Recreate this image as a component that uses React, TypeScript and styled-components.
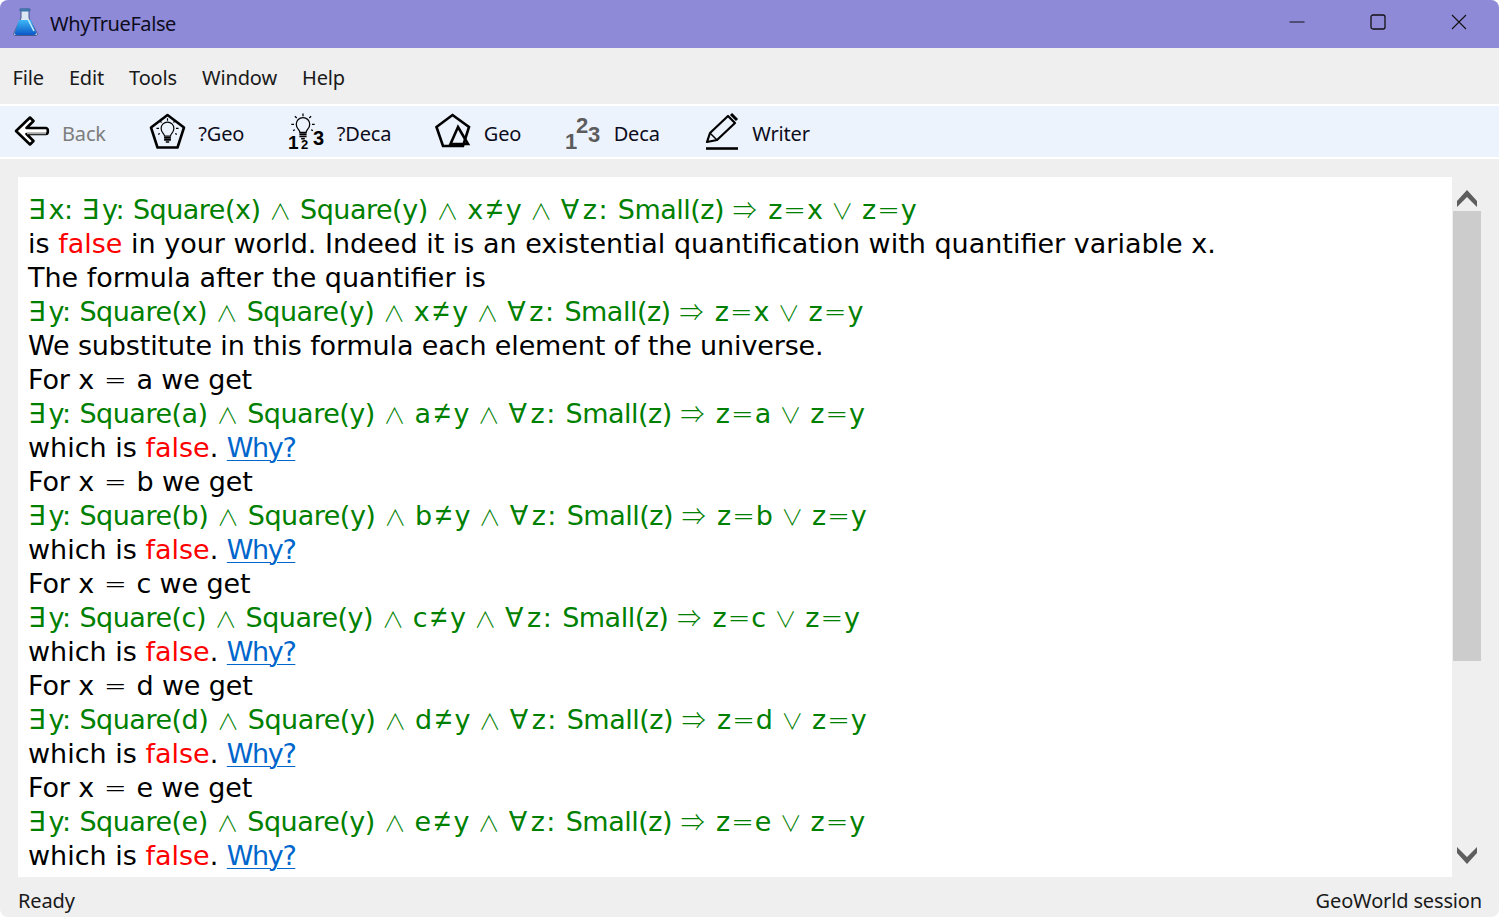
import styled, { createGlobalStyle } from "styled-components";
import { Fragment } from "react";

const GlobalStyle = createGlobalStyle`
  html, body {
    margin: 0;
    padding: 0;
    background: #ffffff;
  }
  #root {
    width: 1499px;
    height: 917px;
  }
`;

const uiFont = `"Noto Sans", "Open Sans", sans-serif`;
const docFont = `"DejaVu Sans", sans-serif`;

const Window = styled.div`
  width: 1499px;
  height: 917px;
  display: flex;
  flex-direction: column;
  background: #efefef;
  border-radius: 8px;
  overflow: hidden;
  font-family: ${uiFont};
  color: #000;
`;

const TitleBar = styled.div`
  height: 48px;
  flex: none;
  display: flex;
  align-items: center;
  background: #8f8ad8;
  padding-left: 12px;
`;

const AppTitle = styled.span`
  margin: 0 0 2px 11px;
  font-size: 20px;
  letter-spacing: -0.4px;
  color: #0c0c1c;
`;

const WindowButtons = styled.div`
  margin-left: auto;
  display: flex;
  height: 100%;
  box-sizing: border-box;
  padding-bottom: 4px;
`;

const WindowButton = styled.div`
  width: 81px;
  display: flex;
  align-items: center;
  justify-content: center;
`;

const MenuBar = styled.div`
  height: 58px;
  flex: none;
  display: flex;
  align-items: center;
  gap: 25px;
  padding: 3px 0 0 12.5px;
  box-sizing: border-box;
  border-bottom: 2px solid #fff;
  font-size: 20px;
  letter-spacing: -0.15px;
  color: #1a1a1a;
`;

const Toolbar = styled.div`
  height: 53px;
  flex: none;
  display: flex;
  align-items: center;
  gap: 43.4px;
  padding: 0 0 1px 14px;
  box-sizing: border-box;
  background: #ecf3fc;
  border-bottom: 2px solid #fff;
`;

const ToolButton = styled.div`
  display: flex;
  align-items: center;
  gap: 12px;
`;

const ToolLabel = styled.span<{ $disabled?: boolean }>`
  padding-top: 4px;
  font-size: 20px;
  letter-spacing: -0.15px;
  color: ${(p) => (p.$disabled ? "#7d7d7d" : "#0c0c1c")};
`;

const Main = styled.div`
  flex: 1;
  min-height: 0;
  display: flex;
  padding: 18px 18px 0 18px;
`;

const Document = styled.div`
  width: 1434px;
  height: 700px;
  flex: none;
  box-sizing: border-box;
  background: #fff;
  padding: 16px 0 0 10px;
  overflow: hidden;
  font-family: ${docFont};
  font-size: 27px;
  line-height: 34px;
  color: #000;
`;

const Line = styled.div<{ $tight?: boolean }>`
  white-space: pre;
  height: 34px;
  letter-spacing: ${(p) => (p.$tight ? "-0.14px" : "0")};
`;

const Formula = styled(Line)`
  color: #008000;
  letter-spacing: -0.5px;
  word-spacing: 0.7px;
`;

// "=" comes from the light cut, the connectives from the CJK face where they are thin
const ThinEquals = styled.span`
  font-weight: 200;
  padding: 0 1.5px;
`;

const NotEqual = styled.span`
  font-family: "Liberation Sans", sans-serif;
  font-size: 30px;
  line-height: 0;
  padding: 0 3.5px;
`;

const Connective = styled.span<{ $arrow?: boolean }>`
  font-family: "Noto Sans CJK JP", sans-serif;
  font-size: ${(p) => (p.$arrow ? "24px" : "22px")};
  font-weight: 300;
  line-height: 0;
  letter-spacing: ${(p) => (p.$arrow ? "2.5px" : "0")};
`;

const Quantifier = styled.span`
  letter-spacing: 3.5px;
`;

const BoundVar = styled.span`
  letter-spacing: 1.5px;
`;

const False = styled.span`
  color: #ff0000;
`;

const Why = styled.span`
  color: #0066cc;
  letter-spacing: -1.4px;
  text-decoration: underline;
  text-underline-offset: 3px;
  text-decoration-thickness: 1px;
`;

const Scrollbar = styled.div`
  width: 28px;
  height: 700px;
  margin-left: 1px;
  flex: none;
  display: flex;
  flex-direction: column;
  align-items: center;
`;

const ArrowCell = styled.div<{ $down?: boolean }>`
  height: 34px;
  width: 100%;
  box-sizing: border-box;
  display: flex;
  justify-content: center;
  flex: none;
  align-items: ${(p) => (p.$down ? "flex-start" : "flex-end")};
  padding: ${(p) => (p.$down ? "4px 0 0" : "0 0 4px")};
`;

const Track = styled.div`
  flex: 1;
  width: 100%;
`;

const Thumb = styled.div`
  height: 450px;
  width: 100%;
  background: #cccccc;
`;

const StatusBar = styled.div`
  height: 40px;
  flex: none;
  display: flex;
  align-items: center;
  justify-content: space-between;
  padding: 6px 17px 0 18px;
  box-sizing: border-box;
  font-size: 20px;
  letter-spacing: -0.15px;
  color: #1a1a1a;
`;

const Flask = () => (
  <svg width="27" height="32" viewBox="0 0 27 32">
    <defs>
      <linearGradient id="liquid" x1="0" y1="0" x2="0" y2="1">
        <stop offset="0" stopColor="#3db8f6" />
        <stop offset="1" stopColor="#0b57c8" />
      </linearGradient>
    </defs>
    <path d="M8 1h10v2h-1v7l8 15c1 2 0 2.500-2 2.500H4c-2 0-3-.5-2-2.500l7-15V3H8z" fill="#dce7f4" stroke="#47598f" strokeWidth="1" />
    <path d="M7 12h12l5 12c.5 2-.5 3-2 3H5c-2 0-3-1-2-3z" fill="url(#liquid)" />
    <path d="M16 11l6 12" stroke="#c6ebfc" strokeWidth="1.600" />
    <rect x="8" y="0.500" width="10" height="3" fill="#3f77ad" />
  </svg>
);

const MinimizeIcon = () => (
  <svg width="16" height="16" viewBox="0 0 16 16">
    <path d="M0.500 8h15" stroke="#111" strokeWidth="1" />
  </svg>
);

const MaximizeIcon = () => (
  <svg width="16" height="16" viewBox="0 0 16 16">
    <rect x="1" y="1" width="14" height="14" rx="2" fill="none" stroke="#111" strokeWidth="1.300" />
  </svg>
);

const CloseIcon = () => (
  <svg width="16" height="16" viewBox="0 0 16 16">
    <path d="M1 1l14 14M15 1L1 15" stroke="#111" strokeWidth="1.100" />
  </svg>
);

const BackIcon = () => (
  <svg width="36" height="32" viewBox="0 0 36 32">
    <path
      d="M16 2.500L2 16l14 13.500 3.500-3.500-7-7H32c2.500 0 2.500-6 0-6H12.500l7-7z"
      fill="#fff"
      stroke="#000"
      strokeWidth="2.600"
      strokeLinejoin="round"
    />
    <path d="M13 18.500h19" stroke="#aaa" strokeWidth="1.500" />
  </svg>
);

const Bulb = ({ x, y, scale }: { x: number; y: number; scale: number }) => (
  <g transform={`translate(${x} ${y}) scale(${scale})`} fill="none" stroke="#000">
    <path d="M-3.500 7c0-3-4-4-4-9a7.500 7.500 0 0 1 15 0c0 5-4 6-4 9z" transform="translate(0 -1)" strokeWidth="1.400" />
    <path d="M-4 8h8M-4 10.500h8" strokeWidth="2" />
    <path d="M-2 13h4" strokeWidth="1.800" />
    <path d="M0-15v3M-9-12l2 2M9-12l-2 2M-13-3h3M13-3h-3M-11 4l2-1M11 4L9 3" strokeWidth="1.400" />
  </g>
);

const GeoQuestionIcon = () => (
  <svg width="37" height="37" viewBox="0 0 37 37">
    <path d="M18.500 2L35 14.500l-6.500 20h-20L2 14.500z" fill="none" stroke="#000" strokeWidth="2.600" strokeLinejoin="round" />
    <Bulb x={18.500} y={18} scale={0.85} />
  </svg>
);

const NumberText = styled.text`
  font-family: "Liberation Sans", Arial, sans-serif;
  font-weight: 700;
`;

const DecaQuestionIcon = () => (
  <svg width="37" height="49" viewBox="0 -6 37 49">
    <Bulb x={15} y={14} scale={0.9} />
    <NumberText x="0" y="36" fontSize="19" fill="#000">1</NumberText>
    <NumberText x="13" y="36" fontSize="13" fill="#000">2</NumberText>
    <NumberText x="25" y="32" fontSize="20" fill="#000">3</NumberText>
  </svg>
);

const GeoIcon = () => (
  <svg width="37" height="36" viewBox="0 0 37 36">
    <path d="M17.500 2L34 14l-6 19H8L1.500 14z" fill="none" stroke="#000" strokeWidth="2.600" strokeLinejoin="miter" />
    <path d="M23 14L33 31H15.500z" fill="none" stroke="#000" strokeWidth="2.600" />
  </svg>
);

const DecaIcon = () => (
  <svg width="37" height="49" viewBox="0 -6 37 49" fill="#5c5c5c">
    <NumberText x="0" y="36" fontSize="22">1</NumberText>
    <NumberText x="11" y="20" fontSize="22">2</NumberText>
    <NumberText x="23" y="29" fontSize="22">3</NumberText>
  </svg>
);

const WriterIcon = () => (
  <svg width="37" height="37" viewBox="-2 0 37 37">
    <path d="M2 29l3-9L23 3l7 7-18 17z" fill="none" stroke="#000" strokeWidth="2.200" strokeLinejoin="round" />
    <path d="M26 1l6 6" stroke="#000" strokeWidth="3" />
    <path d="M5 20l7 7" stroke="#000" strokeWidth="1.500" />
    <path d="M1 35.500h32" stroke="#000" strokeWidth="2.600" />
  </svg>
);

const ChevronUp = () => (
  <svg width="20" height="17" viewBox="0 0 20 17">
    <polygon points="10,0 20,11 20,17 10,7 0,17 0,11" fill="#5e5e5e" />
  </svg>
);

const ChevronDown = () => (
  <svg width="20" height="17" viewBox="0 0 20 17">
    <polygon points="10,17 20,6 20,0 10,10 0,0 0,6" fill="#5e5e5e" />
  </svg>
);

const tools = [
  { label: "Back", icon: <BackIcon />, disabled: true },
  { label: "?Geo", icon: <GeoQuestionIcon /> },
  { label: "?Deca", icon: <DecaQuestionIcon /> },
  { label: "Geo", icon: <GeoIcon /> },
  { label: "Deca", icon: <DecaIcon /> },
  { label: "Writer", icon: <WriterIcon /> },
];

const withSymbols = (text: string) =>
  text.split(/(∃|∀|z:|∧|∨|⇒|≠|=)/).map((part, i) => {
    if (i % 2 === 0) return <Fragment key={i}>{part}</Fragment>;
    if (part === "=") return <ThinEquals key={i}>{part}</ThinEquals>;
    if (part === "≠") return <NotEqual key={i}>{part}</NotEqual>;
    if (part === "∃" || part === "∀") return <Quantifier key={i}>{part}</Quantifier>;
    if (part === "z:") return <BoundVar key={i}>{part}</BoundVar>;
    return <Connective key={i} $arrow={part === "⇒"}>{part}</Connective>;
  });

const formula = (v: string) =>
  withSymbols(`∃y: Square(${v}) ∧ Square(y) ∧ ${v}≠y ∧ ∀z: Small(z) ⇒ z=${v} ∨ z=y`);

const Result = () => (
  <Line>
    which is <False>false</False>. <Why>Why?</Why>
  </Line>
);

function App() {
  return (
    <Window>
      <GlobalStyle />
      <TitleBar>
        <Flask />
        <AppTitle>WhyTrueFalse</AppTitle>
        <WindowButtons>
          <WindowButton><MinimizeIcon /></WindowButton>
          <WindowButton><MaximizeIcon /></WindowButton>
          <WindowButton><CloseIcon /></WindowButton>
        </WindowButtons>
      </TitleBar>
      <MenuBar>
        {["File", "Edit", "Tools", "Window", "Help"].map((m) => (
          <span key={m}>{m}</span>
        ))}
      </MenuBar>
      <Toolbar>
        {tools.map((t) => (
          <ToolButton key={t.label}>
            {t.icon}
            <ToolLabel $disabled={t.disabled}>{t.label}</ToolLabel>
          </ToolButton>
        ))}
      </Toolbar>
      <Main>
        <Document>
          <Formula>{withSymbols("∃x: ∃y: Square(x) ∧ Square(y) ∧ x≠y ∧ ∀z: Small(z) ⇒ z=x ∨ z=y")}</Formula>
          <Line>
            is <False>false</False> in your world. Indeed it is an existential quantification with quantifier variable x.
          </Line>
          <Line>The formula after the quantifier is</Line>
          <Formula>{formula("x")}</Formula>
          <Line $tight>We substitute in this formula each element of the universe.</Line>
          {["a", "b", "c", "d", "e"].map((v) => (
            <Fragment key={v}>
              <Line $tight>For x {withSymbols("=")} {v} we get</Line>
              <Formula>{formula(v)}</Formula>
              <Result />
            </Fragment>
          ))}
        </Document>
        <Scrollbar>
          <ArrowCell><ChevronUp /></ArrowCell>
          <Track><Thumb /></Track>
          <ArrowCell $down><ChevronDown /></ArrowCell>
        </Scrollbar>
      </Main>
      <StatusBar>
        <span>Ready</span>
        <span>GeoWorld session</span>
      </StatusBar>
    </Window>
  );
}

export default App;
